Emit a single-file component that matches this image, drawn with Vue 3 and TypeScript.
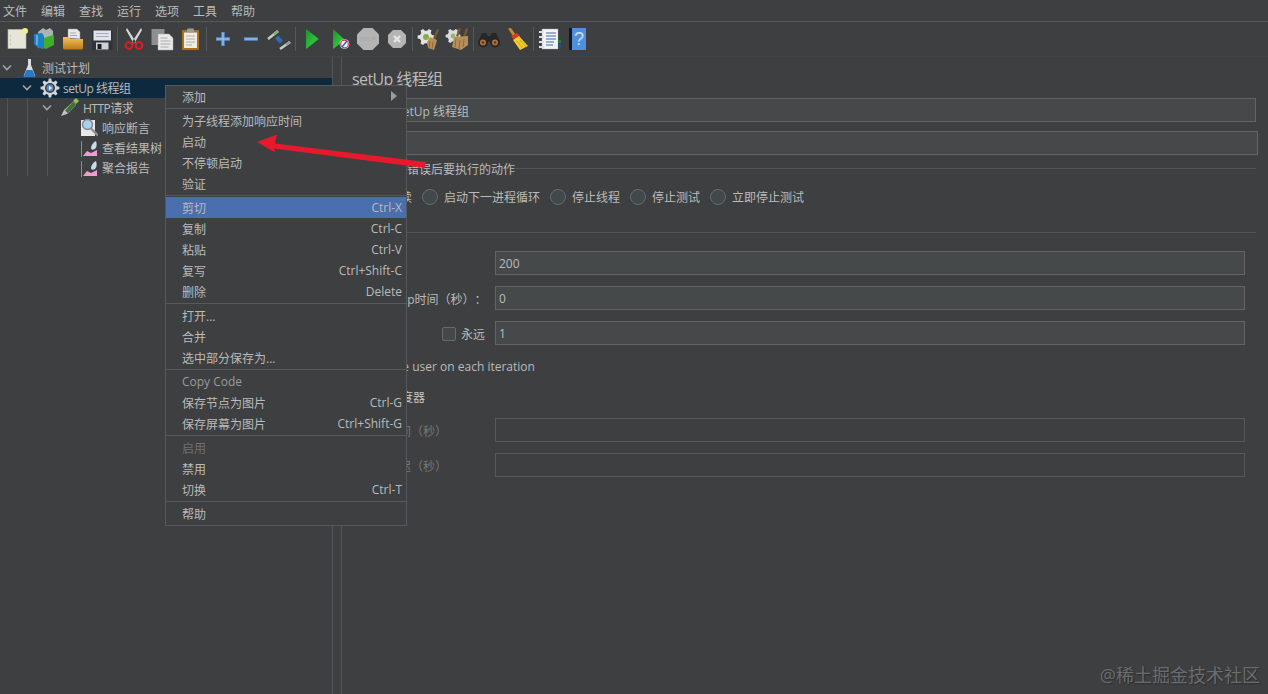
<template>
  <div class="app">
    <nav class="menubar">
      <span v-for="m in menus" :key="m" class="menubar-item">{{ m }}</span>
    </nav>

    <div class="toolbar">
      <button class="tool" title="新建">
        <svg width="24" height="24" viewBox="0 0 24 24">
          <rect x="3" y="2.500" width="18" height="19" fill="#e6e6d8" stroke="#b9b9ab" stroke-width=".6" />
          <path d="M5 9h1M5 13h1M5 17h1" stroke="#aaa" stroke-width="1" />
          <circle cx="20" cy="4" r="3" fill="#f1ee8e" />
        </svg>
      </button>
      <button class="tool" title="模板">
        <svg width="24" height="24" viewBox="0 0 24 24">
          <path d="M5 5l5-4 3 2 4-2 3 3v8H5z" fill="#a9b4b4" />
          <path d="M1 7l8-1 2 3v13l-6-1-4-4z" fill="#1f7fc4" />
          <path d="M11 11l9-3 1 1v9l-8 4-2-1z" fill="#3fae2c" />
          <path d="M4 8v10" stroke="#7fc0ea" stroke-width="1.400" />
        </svg>
      </button>
      <button class="tool" title="打开">
        <svg width="24" height="24" viewBox="0 0 24 24">
          <path d="M7 11V2h9l3 3v7z" fill="#e8e8e8" stroke="#9a9a9a" stroke-width=".5" />
          <path d="M9 6h6M9 8.500h7" stroke="#999" stroke-width=".8" />
          <path d="M2 10h6l2 2h12v9a1.500 1.500 0 0 1-1.500 1.500h-17A1.500 1.500 0 0 1 2 21z" fill="url(#folder)" />
          <defs>
            <linearGradient id="folder" x1="0" y1="0" x2="0" y2="1">
              <stop offset="0" stop-color="#f4c25a" />
              <stop offset="1" stop-color="#b97a18" />
            </linearGradient>
          </defs>
        </svg>
      </button>
      <button class="tool" title="保存">
        <svg width="24" height="24" viewBox="0 0 24 24">
          <path d="M2 2.500h18l2.500 2.500v18H2z" fill="#2f333c" />
          <rect x="3.500" y="3.500" width="17.500" height="10" fill="#dfe3ea" />
          <path d="M6 6.500h12.500M6 9.500h12.500" stroke="#9fa6b4" stroke-width=".9" />
          <rect x="6" y="15.500" width="12.500" height="7" fill="#cfd2d6" />
          <rect x="7.500" y="17" width="4" height="5" fill="#1b1b1d" />
        </svg>
      </button>
      <span class="tool-sep"></span>

      <button class="tool" title="剪切">
        <svg width="24" height="24" viewBox="0 0 24 24">
          <path d="M5 1l9 14-2 2L4 3zM19 1l-9 14 2 2 8-14z" fill="#d5d8da" />
          <circle cx="7" cy="18.500" r="3.300" fill="none" stroke="#d91f1f" stroke-width="2.200" />
          <circle cx="17" cy="18.500" r="3.300" fill="none" stroke="#d91f1f" stroke-width="2.200" />
        </svg>
      </button>
      <button class="tool" title="复制">
        <svg width="24" height="24" viewBox="0 0 24 24">
          <rect x="1.500" y="2" width="13" height="16" fill="#8d8f90" />
          <path d="M8 7h11l4 4v12H8z" fill="#e9e9e9" stroke="#aaa" stroke-width=".5" />
          <path d="M10.500 11h7M10.500 14h10M10.500 17h10M10.500 20h8" stroke="#a5a5a5" stroke-width=".9" />
        </svg>
      </button>
      <button class="tool" title="粘贴">
        <svg width="24" height="24" viewBox="0 0 24 24">
          <rect x="4" y="3" width="17" height="20" rx="1" fill="#a9701f" />
          <path d="M6 5.500h13v15.500H6z" fill="#f1ede2" />
          <rect x="9" y="1.500" width="7" height="4" rx="1" fill="#9c9c9c" />
          <path d="M8 9h9M8 12h9M8 15h9M8 18h6" stroke="#a8a8a8" stroke-width=".9" />
        </svg>
      </button>
      <span class="tool-sep"></span>

      <button class="tool" title="展开">
        <svg width="24" height="24" viewBox="0 0 24 24">
          <path d="M12 5v14M5 12h14" stroke="#5d94d2" stroke-width="3.400" />
          <path d="M12 6v12M6 12h12" stroke="#a9cdf0" stroke-width="1" />
        </svg>
      </button>
      <button class="tool" title="折叠">
        <svg width="24" height="24" viewBox="0 0 24 24">
          <path d="M5 12h14" stroke="#5d94d2" stroke-width="3.400" />
          <path d="M6 12h12" stroke="#a9cdf0" stroke-width="1" />
        </svg>
      </button>
      <button class="tool" title="切换">
        <svg width="24" height="24" viewBox="0 0 24 24">
          <path d="M1 12L11 4" stroke="#c3cdbc" stroke-width="2.600" />
          <path d="M7 7.500L11 4" stroke="#7fb27a" stroke-width="2.600" />
          <path d="M13 22l10-7" stroke="#c9cdd0" stroke-width="2.600" />
          <path d="M19 18l4-3" stroke="#8aa39a" stroke-width="2.600" />
          <path d="M9.500 10l5 5" stroke="#2f6bb8" stroke-width="4.500" />
        </svg>
      </button>
      <span class="tool-sep"></span>

      <button class="tool" title="启动">
        <svg width="24" height="24" viewBox="0 0 24 24">
          <path d="M6 2l13 10-13 10z" fill="url(#play)" />
          <defs>
            <linearGradient id="play" x1="0" y1="0" x2="1" y2="1">
              <stop offset="0" stop-color="#1f8f2f" />
              <stop offset=".6" stop-color="#2bc43a" />
              <stop offset="1" stop-color="#0b7a1e" />
            </linearGradient>
          </defs>
        </svg>
      </button>
      <button class="tool" title="不停顿启动">
        <svg width="24" height="24" viewBox="0 0 24 24">
          <path d="M5 2l12 11-12 9z" fill="url(#play)" />
          <circle cx="16.500" cy="17" r="4.800" fill="#f3f3f3" />
          <circle cx="16.500" cy="17" r="3.800" fill="#fff" stroke="#d8304a" stroke-width="1.200" />
          <path d="M14 20l5-6" stroke="#2a62c4" stroke-width="1.500" />
        </svg>
      </button>
      <button class="tool" title="停止">
        <svg width="24" height="24" viewBox="0 0 24 24">
          <path d="M7.500 1h9l6.500 6.500v9L16.500 23h-9L1 16.500v-9z" fill="#b4b4b4" />
          <text x="12" y="14" text-anchor="middle" class="stop-text">STOP</text>
        </svg>
      </button>
      <button class="tool" title="关闭">
        <svg width="24" height="24" viewBox="0 0 24 24">
          <path d="M8 3h8l5 5v8l-5 5H8l-5-5V8z" fill="#b4b4b4" />
          <path d="M9 9l6 6M15 9l-6 6" stroke="#e6e6e6" stroke-width="2.400" />
        </svg>
      </button>
      <span class="tool-sep"></span>

      <button class="tool" title="清除">
        <svg width="24" height="24" viewBox="0 0 24 24">
          <path :d="gear(9, 10, 8.500, 6)" fill="#e2e2e2" />
          <circle cx="9" cy="10" r="3" fill="#7fb241" />
          <path d="M20 2l2 1-4 9-2-1z" fill="#7a5a35" />
          <path d="M13 10l7 3-3 10-6-2-1-6z" fill="#b98f58" />
          <path d="M13 14l-1 7M16 15l-1 7" stroke="#7f5f36" stroke-width=".8" />
        </svg>
      </button>
      <button class="tool" title="清除全部">
        <svg width="24" height="24" viewBox="0 0 24 24">
          <path :d="gear(8, 9, 7.500, 6)" fill="#dcdcdc" />
          <circle cx="8" cy="9" r="2.400" fill="#8fb96b" />
          <path d="M14 1l2 1-3 8-2-1zM21 1l2 1-3 9-2-1z" fill="#7a5a35" />
          <path d="M9 10l14-1v9l-7 5-9-3z" fill="#b98f58" />
          <path d="M11 12l-1 8M15 13l-1 9M19 12l-1 8" stroke="#7f5f36" stroke-width=".8" />
        </svg>
      </button>
      <span class="tool-sep"></span>

      <button class="tool" title="查找">
        <svg width="24" height="24" viewBox="0 0 24 24">
          <path d="M5 6h4l2 3h2l2-3h4l4 9H1z" fill="#26272a" />
          <circle cx="6" cy="15.500" r="5" fill="#26272a" />
          <circle cx="18" cy="15.500" r="5" fill="#26272a" />
          <circle cx="6" cy="15.500" r="3" fill="#b5703a" />
          <circle cx="18" cy="15.500" r="3" fill="#b5703a" />
          <circle cx="6" cy="15.500" r="1.300" fill="#5a3a22" />
          <circle cx="18" cy="15.500" r="1.300" fill="#5a3a22" />
        </svg>
      </button>
      <button class="tool" title="重置查找">
        <svg width="24" height="24" viewBox="0 0 24 24">
          <path d="M2 1.500l3-.5 5 7-2.500 2z" fill="#c98a2c" />
          <path d="M5 9l6-3 3 3-6 4z" fill="#d23c2c" />
          <path d="M7 13l6-4 9 10-8 4z" fill="#f2cc2e" />
          <path d="M11 14l6 8M14 13l6 7" stroke="#c39a1a" stroke-width=".8" />
        </svg>
      </button>
      <span class="tool-sep"></span>

      <button class="tool" title="函数助手">
        <svg width="24" height="24" viewBox="0 0 24 24">
          <rect x="4" y="2" width="16" height="20" fill="#f2f4f7" stroke="#9aa" stroke-width=".4" />
          <path d="M1 5h5M1 10h5M1 15h5M1 20h5" stroke="#dfe1e4" stroke-width="1.800" />
          <path d="M8 6h10M8 9h10M8 12h10M8 15h8M8 18h7" stroke="#4169a8" stroke-width="1.200" />
          <path d="M20 13h3v3h-3z" fill="#1f7f36" />
          <path d="M20 17h3v3h-3z" fill="#2c4f8c" />
        </svg>
      </button>
      <button class="tool" title="帮助">
        <svg width="24" height="24" viewBox="0 0 24 24">
          <rect x="4" y="1" width="16" height="22" fill="#4f8fe0" />
          <rect x="3" y="1" width="3" height="22" fill="#16181c" />
          <text x="13" y="18" text-anchor="middle" class="help-text">?</text>
        </svg>
      </button>
    </div>

    <div class="main">
      <aside class="tree">
        <span class="guide guide-0"></span>
        <span class="guide guide-1"></span>
        <span class="guide guide-2"></span>
        <div
          v-for="node in treeNodes"
          :key="node.label"
          class="tree-row"
          :class="[`depth-${node.depth}`, { selected: node.selected }]"
        >
          <svg v-if="node.open" class="chevron" width="10" height="8" viewBox="0 0 10 8">
            <path d="M1 1.500l4 4 4-4" fill="none" stroke="#a3a6a8" stroke-width="1.600" />
          </svg>
          <span v-else class="chevron-gap"></span>

          <svg v-if="node.icon === 'plan'" class="node-icon" width="18" height="18" viewBox="0 0 18 18">
            <path d="M8 0h3v6l4 10a1.300 1.300 0 0 1-1.200 2H5.200A1.300 1.300 0 0 1 4 16L8 6z" fill="#d8dde4" />
            <path d="M6.500 11h6l2.500 5.500a1 1 0 0 1-1 1.500H5a1 1 0 0 1-1-1.500z" fill="#2b78c9" />
          </svg>
          <svg v-else-if="node.icon === 'gear'" class="node-icon" width="20" height="20" viewBox="0 0 20 20">
            <path :d="gear(10, 10, 9.500, 8)" fill="#d3d5d8" />
            <circle cx="10" cy="10" r="5" fill="#3a3d41" />
            <circle cx="10" cy="10" r="3.400" fill="#5b8fcf" />
            <path d="M9 8l3 2-3 2z" fill="#fff" />
          </svg>
          <svg v-else-if="node.icon === 'pen'" class="node-icon" width="20" height="20" viewBox="0 0 20 20">
            <path d="M1 18l3-6L13 4l3 3-9 9z" fill="#c0c4c0" />
            <path d="M5 12.500L13 4l3 3-8.500 8z" fill="#3f6f3a" />
            <path d="M13 3l3-3 3 3-3 3z" fill="#8fbf5f" />
          </svg>
          <svg v-else-if="node.icon === 'assert'" class="node-icon" width="20" height="20" viewBox="0 0 20 20">
            <rect x="3" y="2" width="14" height="16" fill="#e8e8e8" />
            <circle cx="9.500" cy="6.500" r="5" fill="#a9d2ee" stroke="#7d8a96" stroke-width="1.400" />
            <path d="M13 10.500l7 7" stroke="#8b8f94" stroke-width="2.400" />
          </svg>
          <svg v-else class="node-icon" width="20" height="20" viewBox="0 0 20 20">
            <path d="M3.500 3v16" stroke="#8a8d8f" stroke-width="1" />
            <path d="M5 18l4-5 4 2 6-3v6z" fill="#ef9bd0" />
            <path d="M13 10c0-3 3-6 5-7 1 3 1 6-1 8-2 1-4 1-4-1z" fill="#c9d9ee" />
          </svg>

          <span class="node-label">{{ node.label }}</span>
        </div>
      </aside>

      <section class="panel">
        <h1 class="panel-title">setUp 线程组</h1>

        <div class="name-row">
          <label class="name-label">名称：</label>
          <input class="field" value="setUp 线程组" />
        </div>
        <div class="name-row comment-row">
          <label class="name-label">注释：</label>
          <input class="field" value="" />
        </div>

        <div class="legend legend-first"><span>在取样器错误后要执行的动作</span></div>
        <div class="radios">
          <label v-for="r in errorActions" :key="r" class="radio-item">
            <span class="radio"></span>{{ r }}
          </label>
        </div>

        <div class="legend legend-second"><span>线程属性</span></div>
        <div class="props">
          <div class="prop-row">
            <label class="prop-label">线程数：</label>
            <input class="field" value="200" />
          </div>
          <div class="prop-row">
            <label class="prop-label ramp">Ramp-Up时间（秒）：</label>
            <input class="field" value="0" />
          </div>
          <div class="prop-row">
            <label class="prop-label loop">
              <span>循环次数</span>
              <span class="check-wrap"><span class="checkbox"></span>永远</span>
            </label>
            <input class="field" value="1" />
          </div>
          <div class="same-user">
            <span class="checkbox"></span>Same user on each iteration
          </div>
          <div class="scheduler">
            <span class="checkbox"></span>调度器
          </div>
          <div class="prop-row dim first-dim">
            <label class="prop-label">持续时间（秒）</label>
            <input class="field" disabled />
          </div>
          <div class="prop-row dim">
            <label class="prop-label">启动延迟（秒）</label>
            <input class="field" disabled />
          </div>
        </div>
      </section>
    </div>

    <!-- right-click menu, opened over the tree -->
    <div class="context-menu">
      <template v-for="(group, i) in contextMenu" :key="i">
        <div v-if="i > 0" class="menu-sep"></div>
        <div
          v-for="item in group"
          :key="item.label"
          class="menu-item"
          :class="{ active: item.active, disabled: item.disabled, muted: item.muted }"
        >
          <span>{{ item.label }}</span>
          <span v-if="item.keys" class="menu-keys">{{ item.keys }}</span>
          <svg v-if="item.sub" class="menu-arrow" width="6" height="10" viewBox="0 0 6 10">
            <path d="M0 0l6 5-6 5z" fill="#9a9c9e" />
          </svg>
        </div>
      </template>
    </div>

    <svg class="annotation" width="180" height="40" viewBox="0 0 180 40">
      <path d="M0 8L20 0.500 18 9.500 169 28 168 34 17 14.500 18 18.500z" fill="#e8192c" />
    </svg>

    <div class="watermark">@稀土掘金技术社区</div>
  </div>
</template>

<script setup lang="ts">
interface MenuItem {
  label: string
  keys?: string
  sub?: boolean
  active?: boolean
  disabled?: boolean
  muted?: boolean
}

const menus = ['文件', '编辑', '查找', '运行', '选项', '工具', '帮助']

const treeNodes = [
  { label: '测试计划', depth: 0, open: true, icon: 'plan' },
  { label: 'setUp 线程组', depth: 1, open: true, icon: 'gear', selected: true },
  { label: 'HTTP请求', depth: 2, open: true, icon: 'pen' },
  { label: '响应断言', depth: 3, icon: 'assert' },
  { label: '查看结果树', depth: 3, icon: 'chart' },
  { label: '聚合报告', depth: 3, icon: 'chart' },
]

const errorActions = ['继续', '启动下一进程循环', '停止线程', '停止测试', '立即停止测试']

const contextMenu: MenuItem[][] = [
  [{ label: '添加', sub: true }],
  [{ label: '为子线程添加响应时间' }, { label: '启动' }, { label: '不停顿启动' }, { label: '验证' }],
  [
    { label: '剪切', keys: 'Ctrl-X', active: true },
    { label: '复制', keys: 'Ctrl-C' },
    { label: '粘贴', keys: 'Ctrl-V' },
    { label: '复写', keys: 'Ctrl+Shift-C' },
    { label: '删除', keys: 'Delete' },
  ],
  [{ label: '打开...' }, { label: '合并' }, { label: '选中部分保存为...' }],
  [
    { label: 'Copy Code', muted: true },
    { label: '保存节点为图片', keys: 'Ctrl-G' },
    { label: '保存屏幕为图片', keys: 'Ctrl+Shift-G' },
  ],
  [{ label: '启用', disabled: true }, { label: '禁用' }, { label: '切换', keys: 'Ctrl-T' }],
  [{ label: '帮助' }],
]

// outline of a cog with n teeth, used by the tree and the clear buttons
const gear = (cx: number, cy: number, r: number, n: number) => {
  const inner = r * 0.74
  const step = (Math.PI * 2) / n
  const pts: string[] = []
  for (let i = 0; i < n; i++) {
    const a = i * step
    const corners: [number, number][] = [
      [inner, a - step * 0.32],
      [r, a - step * 0.17],
      [r, a + step * 0.17],
      [inner, a + step * 0.32],
    ]
    for (const [rad, ang] of corners) {
      pts.push(`${(cx + rad * Math.cos(ang)).toFixed(2)} ${(cy + rad * Math.sin(ang)).toFixed(2)}`)
    }
  }
  return `M${pts.join('L')}z`
}
</script>

<style scoped>
.app {
  position: relative;
  display: flex;
  flex-direction: column;
  width: 1268px;
  height: 694px;
  overflow: hidden;
  background-color: #3d3f41;
  color: #bbbbbb;
  font-family: 'Open Sans', 'Noto Sans CJK SC', sans-serif;
  font-size: 12px;
  text-spacing-trim: space-all;
}

.menubar {
  display: flex;
  flex: none;
  height: 21px;
  padding-left: 3px;
  line-height: 23px;
  border-bottom: 1px solid #55585a;
}

.menubar-item {
  margin-right: 14px;
}

.toolbar {
  display: flex;
  flex: none;
  align-items: center;
  height: 34px;
  padding-left: 2.5px;
  border-bottom: 1px solid #424547;
}

.tool {
  display: flex;
  flex: none;
  align-items: center;
  justify-content: center;
  width: 28.3px;
  height: 28px;
  padding: 0;
  border: none;
  background: none;
}

.tool-sep {
  flex: none;
  width: 1px;
  height: 24px;
  margin: 0 1.5px;
  background-color: #55585a;
}

.stop-text {
  font-size: 6px;
  fill: #a6a6a6;
}

.help-text {
  font-size: 18px;
  fill: #cfe0f5;
}

.main {
  display: flex;
  flex: 1;
  min-height: 0;
}

.tree {
  position: relative;
  flex: none;
  width: 332px;
  padding-top: 1px;
  border-right: 1px solid #515456;
}

.guide {
  position: absolute;
  width: 1px;
  background-color: #515456;
}

.guide-0 {
  top: 21px;
  left: 7px;
  height: 98px;
}

.guide-1 {
  top: 41px;
  left: 27px;
  height: 78px;
}

.guide-2 {
  top: 61px;
  left: 47px;
  height: 58px;
}

.tree-row {
  position: relative;
  display: flex;
  align-items: center;
  height: 20px;
}

.tree-row.selected {
  background-color: #0d293e;
}

.depth-0 {
  padding-left: 2px;
}

.depth-1 {
  padding-left: 22px;
}

.depth-2 {
  padding-left: 42px;
}

.depth-3 {
  padding-left: 62px;
}

.chevron {
  flex: none;
  margin-right: 8px;
}

.chevron-gap {
  flex: none;
  width: 16px;
}

.node-icon {
  flex: none;
  margin-right: 4px;
}

.depth-1 .node-icon,
.depth-2 .node-icon {
  margin-right: 3px;
}

.depth-1 .node-label,
.depth-2 .node-label {
  letter-spacing: -0.5px;
}

.panel {
  flex: 1;
  min-width: 0;
  margin-left: 8px;
  padding: 12px 10px 0;
  border-left: 1px solid #515456;
}

.panel-title {
  margin: 0;
  font-size: 16px;
  font-weight: normal;
  line-height: 20px;
  letter-spacing: -0.6px;
}

.name-row {
  display: flex;
  align-items: center;
  height: 24px;
  margin-top: 9px;
  margin-right: 2px;
}

.name-row .field {
  padding-top: 2px;
}

.comment-row {
  margin-right: 0;
}

.name-label {
  flex: none;
  width: 41px;
}

.field {
  flex: 1;
  min-width: 0;
  height: 24px;
  padding: 1px 3px 0;
  box-sizing: border-box;
  border: 1px solid #646464;
  background-color: #45494a;
  color: #bbbbbb;
  font: inherit;
  outline: none;
}

.field:disabled {
  border-color: #565859;
  background-color: transparent;
}

.legend {
  display: flex;
  align-items: center;
  height: 14px;
  margin-right: 2px;
}

.legend::before,
.legend::after {
  content: '';
  height: 1px;
  margin-bottom: 2px;
  background-color: #515456;
}

.legend::before {
  width: 7px;
}

.legend::after {
  flex: 1;
}

.legend-first {
  margin-top: 7px;
}

.legend-second {
  margin-top: 20px;
}

.radios {
  display: flex;
  height: 18px;
  margin-top: 12px;
  margin-left: 14px;
}

.radio-item {
  display: flex;
  align-items: center;
  margin-right: 10px;
}

.radio {
  flex: none;
  width: 16px;
  height: 16px;
  margin-right: 6px;
  box-sizing: border-box;
  border: 1px solid #666a6c;
  border-radius: 50%;
  background-color: #43494a;
}

.props {
  margin-top: 11px;
  padding-right: 13px;
}

.prop-row {
  display: flex;
  align-items: center;
  height: 24px;
  margin-bottom: 11px;
}

.prop-label {
  flex: none;
  width: 143px;
  padding-top: 1px;
  padding-left: 6px;
  box-sizing: border-box;
  white-space: nowrap;
}

.ramp {
  padding-left: 10px;
}

.loop {
  display: flex;
  justify-content: space-between;
  padding-right: 10px;
}

.check-wrap {
  display: flex;
  align-items: center;
}

.checkbox {
  flex: none;
  width: 14px;
  height: 14px;
  margin-right: 5px;
  box-sizing: border-box;
  border: 1px solid #666a6c;
  border-radius: 2px;
  background-color: #43494a;
}

.same-user,
.scheduler {
  display: flex;
  align-items: center;
  height: 16px;
}

.same-user {
  margin-top: 13px;
  padding-left: 7px;
}

.scheduler {
  margin-top: 15px;
  padding-left: 18px;
  color: #c4c4c4;
}

.dim {
  color: #757779;
}

.dim .prop-label {
  padding-top: 2px;
  padding-left: 11px;
}

.first-dim {
  margin-top: 13px;
}

.context-menu {
  position: absolute;
  top: 85px;
  left: 165px;
  width: 242px;
  padding: 0 0 1px;
  box-sizing: border-box;
  border: 1px solid #56595b;
  background-color: #3d3f41;
}

.menu-item {
  position: relative;
  display: flex;
  align-items: center;
  justify-content: space-between;
  height: 21px;
  padding: 0 4px 0 16px;
}

.menu-item.active {
  background-color: #4b6eaf;
}

.menu-item.disabled {
  color: #6f7173;
}

.menu-item.muted {
  color: #9a9c9e;
}

.menu-keys {
  white-space: nowrap;
}

.menu-arrow {
  position: absolute;
  top: 5px;
  right: 9px;
}

.menu-sep {
  height: 1px;
  margin: 1px 0;
  background-color: #56595b;
}

.annotation {
  position: absolute;
  top: 134px;
  left: 257px;
}

.watermark {
  position: absolute;
  right: 8px;
  bottom: 6px;
  color: #6a6c6e;
  font-size: 18px;
  line-height: 26px;
  text-shadow: 1px 1px 1px #2c2e30;
}
</style>
